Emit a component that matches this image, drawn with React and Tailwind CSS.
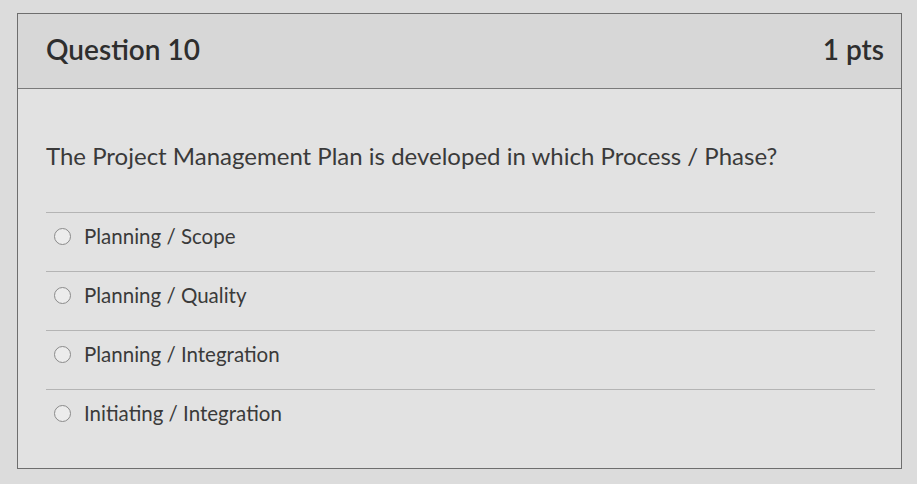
import React from 'react';

const answers = [
  'Planning / Scope',
  'Planning / Quality',
  'Planning / Integration',
  'Initiating / Integration',
];

const App = () => {
  return (
    <div
      className="w-[917px] h-[484px] overflow-hidden bg-[#dcdcdc] pt-[13px] pl-[17px]"
      style={{ fontFamily: 'Lato, "Open Sans", sans-serif' }}
    >
      <div className="w-[885px] h-[456px] border border-[#6e6e6e] bg-[#e2e2e2] flex flex-col">
        {/* Header */}
        <div className="h-[75px] shrink-0 bg-[#d7d7d7] border-b border-[#7a7a7a] flex items-center justify-between pl-[28px] pr-[17px] pb-[5px]">
          <h2 className="text-[28px] font-semibold text-[#2e2e2e]">Question 10</h2>
          <span className="text-[28px] font-semibold text-[#2e2e2e]">1 pts</span>
        </div>

        {/* Body */}
        <div className="pl-[28px] pr-[12px] pt-[51px]">
          <p className="text-[24px] leading-[32px] text-[#3a3a3a]">
            The Project Management Plan is developed in which Process / Phase?
          </p>

          <div className="mt-[40px] w-[829px]">
            {answers.map((answer, index) => (
              <div key={index} className="border-t border-[#b4b4b4] pt-[10px] pb-[22px] pl-[8px] flex items-center gap-[13px]">
                <span className="w-[17px] h-[17px] rounded-full border border-[#8a8a8a] bg-[#ececec] shrink-0" />
                <span className="text-[20.5px] leading-[26px] text-[#3a3a3a]">{answer}</span>
              </div>
            ))}
          </div>
        </div>
      </div>
    </div>
  );
};

export default App;
